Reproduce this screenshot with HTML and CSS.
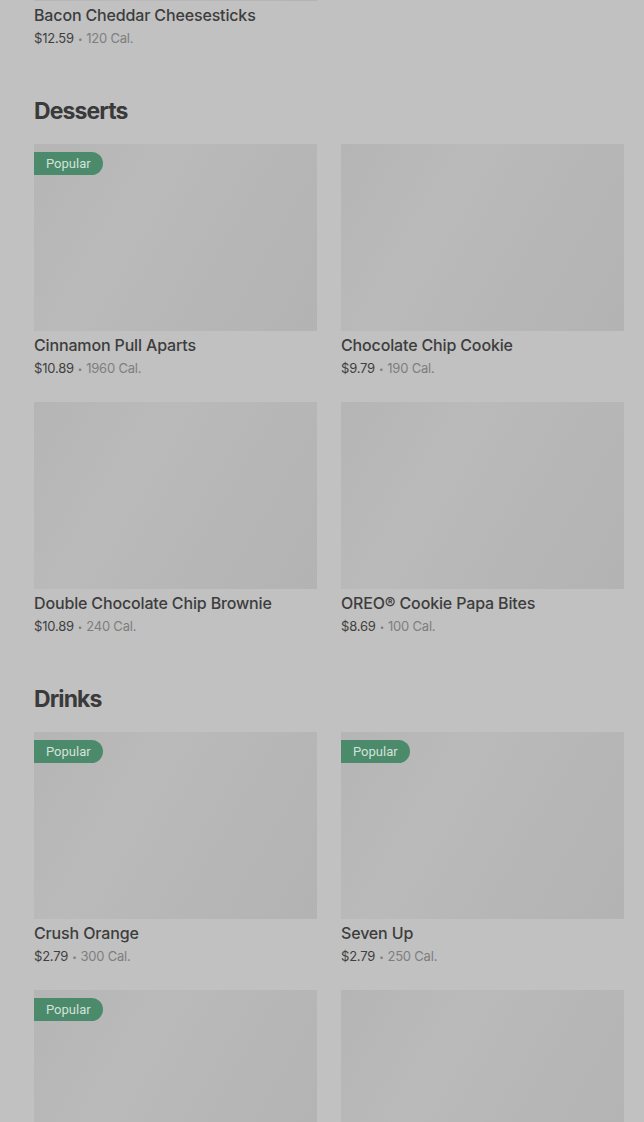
FILE: index.html
```html
<!DOCTYPE html>
<html>
<head>
<meta charset="utf-8">
<link rel="stylesheet" href="styles.css">
</head>
<body>
<div class="page">
  <div class="grid first">
    <div class="card">
      <div class="img img-cut"></div>
      <div class="name">Bacon Cheddar Cheesesticks</div>
      <div class="meta"><span class="price">$12.59</span><span class="dot">•</span>120 Cal.</div>
    </div>
  </div>

  <section class="section">
    <h2 class="title">Desserts</h2>
    <div class="grid">
      <div class="card">
        <div class="img"><span class="badge">Popular</span></div>
        <div class="name">Cinnamon Pull Aparts</div>
        <div class="meta"><span class="price">$10.89</span><span class="dot">•</span>1960 Cal.</div>
      </div>
      <div class="card">
        <div class="img"></div>
        <div class="name">Chocolate Chip Cookie</div>
        <div class="meta"><span class="price">$9.79</span><span class="dot">•</span>190 Cal.</div>
      </div>
      <div class="card">
        <div class="img"></div>
        <div class="name">Double Chocolate Chip Brownie</div>
        <div class="meta"><span class="price">$10.89</span><span class="dot">•</span>240 Cal.</div>
      </div>
      <div class="card">
        <div class="img"></div>
        <div class="name">OREO® Cookie Papa Bites</div>
        <div class="meta"><span class="price">$8.69</span><span class="dot">•</span>100 Cal.</div>
      </div>
    </div>
  </section>

  <section class="section">
    <h2 class="title">Drinks</h2>
    <div class="grid">
      <div class="card">
        <div class="img"><span class="badge">Popular</span></div>
        <div class="name">Crush Orange</div>
        <div class="meta"><span class="price">$2.79</span><span class="dot">•</span>300 Cal.</div>
      </div>
      <div class="card">
        <div class="img"><span class="badge">Popular</span></div>
        <div class="name">Seven Up</div>
        <div class="meta"><span class="price">$2.79</span><span class="dot">•</span>250 Cal.</div>
      </div>
      <div class="card">
        <div class="img"><span class="badge">Popular</span></div>
        <div class="name">&nbsp;</div>
        <div class="meta">&nbsp;</div>
      </div>
      <div class="card">
        <div class="img"></div>
        <div class="name">&nbsp;</div>
        <div class="meta">&nbsp;</div>
      </div>
    </div>
  </section>
</div>
</body>
</html>
```

FILE: styles.css
```css
html, body {
  margin: 0;
  padding: 0;
  background: #c1c1c1;
  overflow: hidden;
}
.page {
  padding: 0 20px 0 34px;
  font-family: Inter, "Liberation Sans", sans-serif;
}
.grid {
  display: grid;
  grid-template-columns: 283px 283px;
  column-gap: 24px;
  row-gap: 22px;
}
.first .img-cut {
  height: 1px;
}
.section {
  margin-top: 45px;
}
.title {
  margin: 0 0 17px 0;
  font-size: 23px;
  line-height: 32px;
  font-weight: 700;
  letter-spacing: -0.9px;
  color: #3a3a3a;
}
.img {
  position: relative;
  height: 187px;
  background: linear-gradient(120deg, #b5b5b5 0%, #bababa 35%, #b7b7b7 60%, #b3b3b3 100%);
}
.badge {
  position: absolute;
  left: 0;
  top: 8px;
  height: 23px;
  line-height: 23px;
  padding: 0 12px 0 12px;
  background: #4b8a6b;
  color: #d3e2da;
  font-family: Roboto, "Liberation Sans", sans-serif;
  font-size: 13px;
  border-radius: 0 12px 12px 0;
}
.name {
  margin-top: 3px;
  height: 22px;
  font-size: 16px;
  line-height: 22px;
  font-weight: 500;
  color: #3d3d3d;
  letter-spacing: -0.15px;
}
.meta {
  height: 24px;
  font-size: 13px;
  line-height: 24px;
  color: #7e7e7e;
  letter-spacing: -0.2px;
}
.price {
  color: #3f3f3f;
}
.dot {
  font-size: 8px;
  line-height: 0;
  margin: 0 4px;
  vertical-align: 1px;
}
```
